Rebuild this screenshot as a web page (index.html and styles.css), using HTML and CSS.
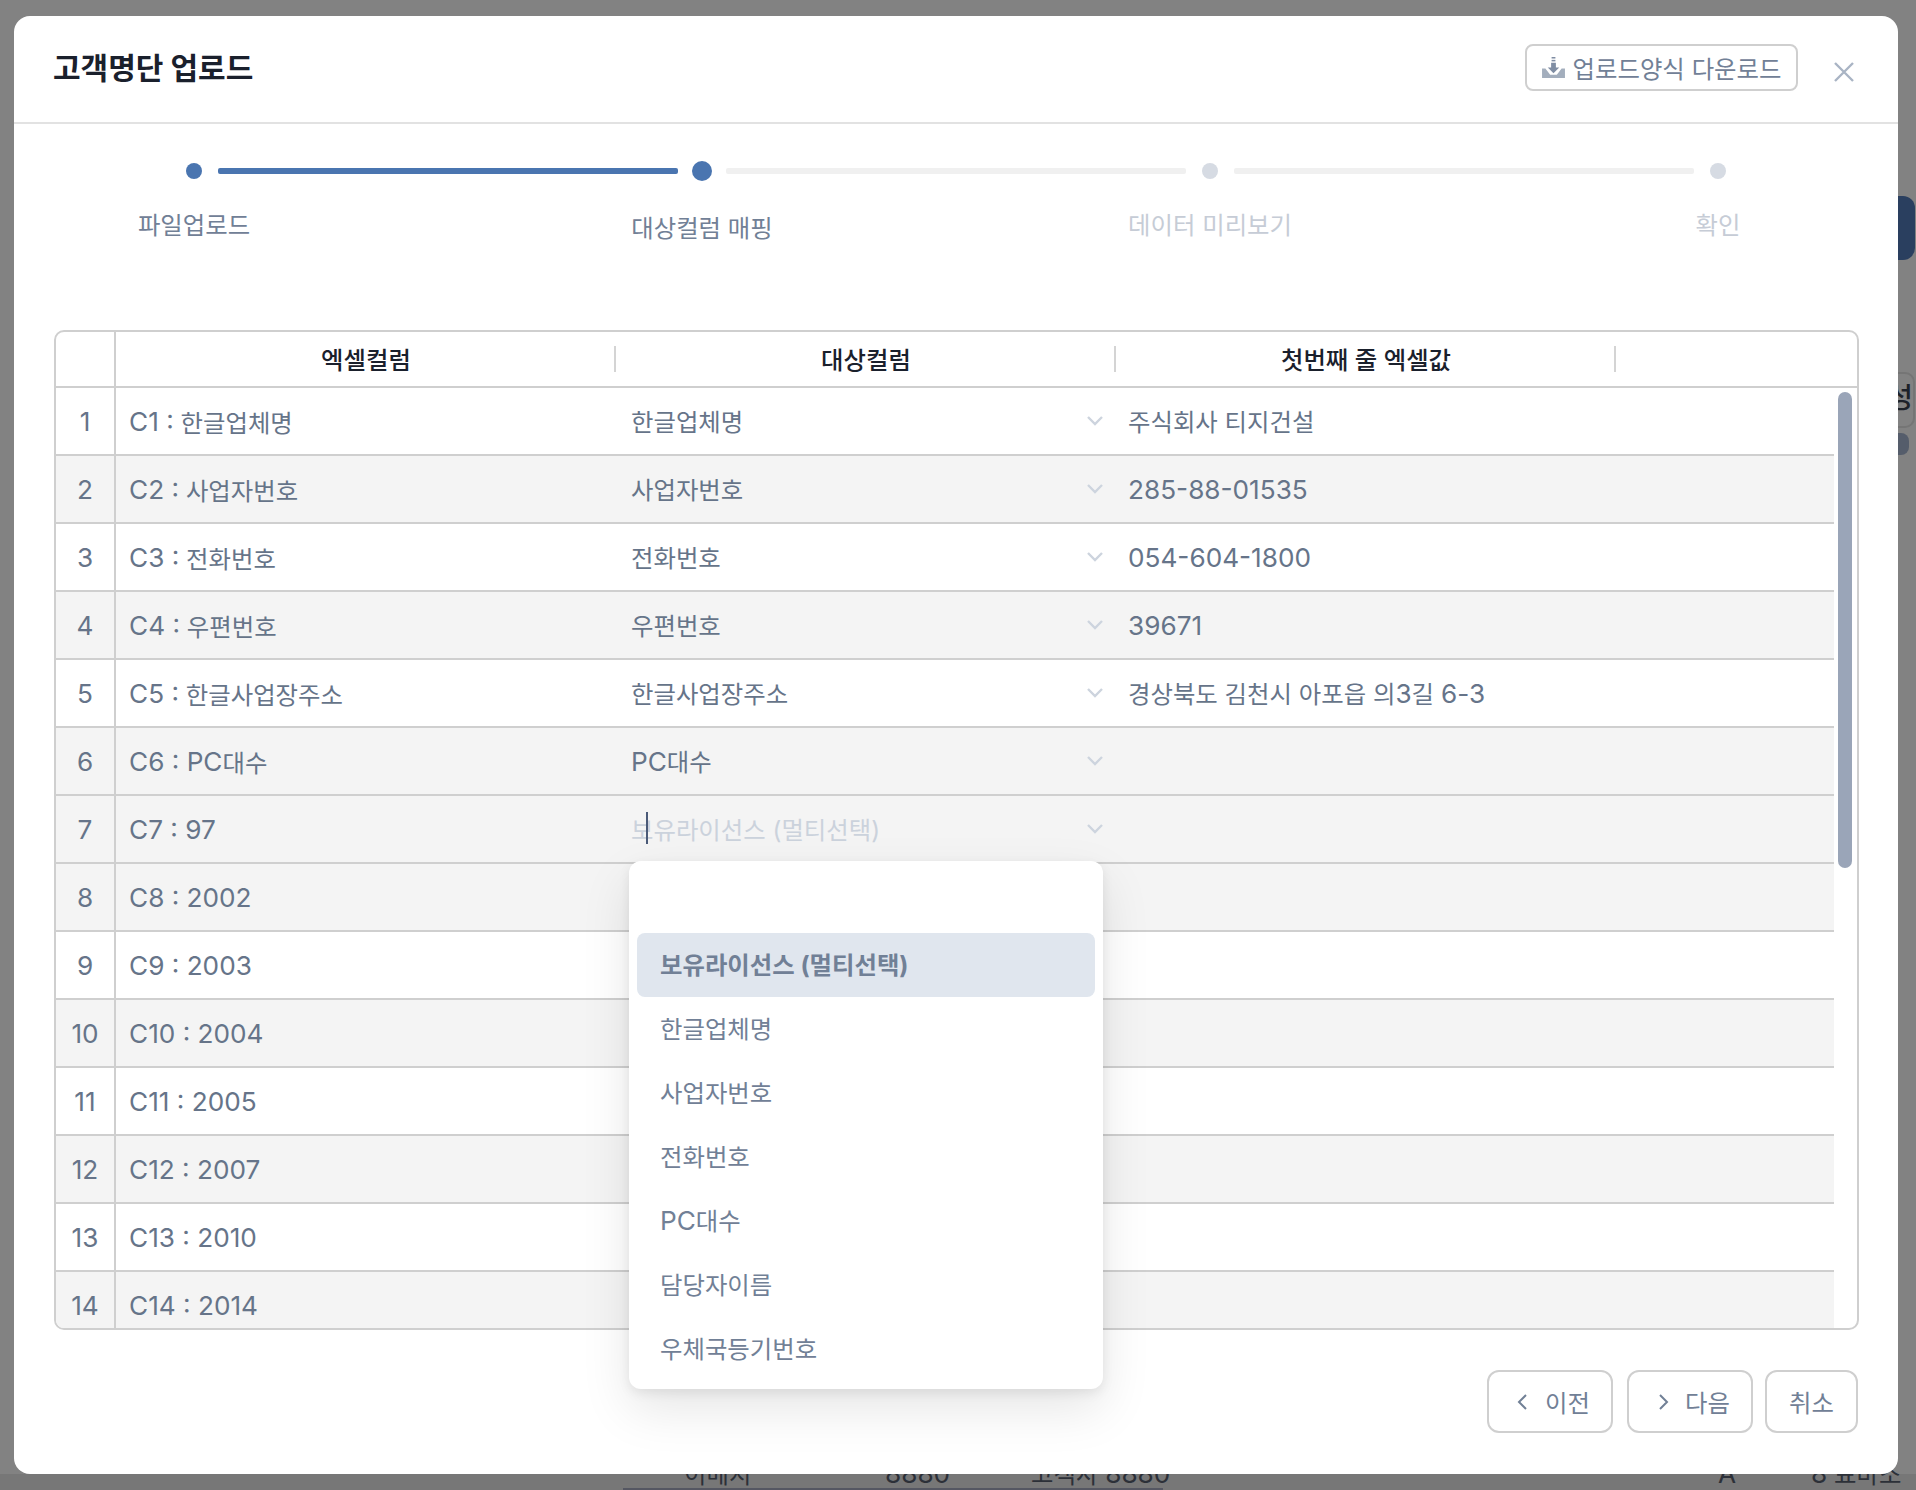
FILE: index.html
```html
<!DOCTYPE html>
<html lang="ko">
<head>
    <meta charset="UTF-8">
    <meta name="viewport" content="width=device-width, initial-scale=1.0">
    <title>고객명단 업로드</title>
    <link rel="stylesheet" href="styles.css">
</head>
<body>

<!-- Page behind the modal -->
<div class="behind">
  <div class="behind-navy"></div>
  <div class="behind-tag">성</div>
  <div class="behind-thumb"></div>
  <div class="behind-strip">
    <span class="behind-text bt-1">이메지</span>
    <span class="behind-text bt-2 num">8880</span>
    <span class="behind-text bt-3">고객사 <span class="num">8880</span></span>
    <span class="behind-text bt-4 num">A</span>
    <span class="behind-text bt-5"><span class="num">8</span> 표바소</span>
    <div class="behind-bar"></div>
  </div>
</div>

<!-- The Modal -->
<div class="modal">

  <div class="modal-header">
    <h1 class="modal-title">고객명단 업로드</h1>
    <button type="button" class="btn btn-download">
      <svg class="icon-download" viewBox="0 0 24 22" width="23" height="21">
        <rect x="10" y="0" width="4" height="1.6" fill="#7f8da3"/>
        <rect x="10" y="3" width="4" height="1.6" fill="#7f8da3"/>
        <path d="M9.5 6h5v5h3.500l-6 6-6-6h3.500z" fill="#7f8da3"/>
        <path d="M0 12h3.500l5 6.500h7l5-6.500H24v10H0z" fill="#a3aebd"/>
      </svg>
      업로드양식 다운로드
    </button>
    <svg class="icon-close" viewBox="0 0 22 22" width="22" height="22">
      <path d="M2 2l18 18M20 2L2 20" stroke="#a9b4c4" stroke-width="2.400" fill="none"/>
    </svg>
  </div>

  <!-- Steps -->
  <div class="steps-track">
    <span class="dot dot-done"></span>
    <span class="line line-done"></span>
    <span class="dot dot-active"></span>
    <span class="line"></span>
    <span class="dot"></span>
    <span class="line"></span>
    <span class="dot"></span>
  </div>
  <div class="steps-labels">
    <span class="step-label step-done">파일업로드</span>
    <span class="step-label step-done step-current">대상컬럼 매핑</span>
    <span class="step-label">데이터 미리보기</span>
    <span class="step-label">확인</span>
  </div>

  <!-- Mapping table -->
  <div class="table-wrap">
    <div class="table-head">
      <div class="th th-index"></div>
      <div class="th">엑셀컬럼</div>
      <div class="th">대상컬럼</div>
      <div class="th">첫번째 줄 엑셀값</div>
    </div>

    <div class="table-body">
      <div class="row">
        <div class="cell cell-index">1</div>
        <div class="cell cell-name"><span class="num">C1 :</span>&nbsp;한글업체명</div>
        <div class="cell cell-select"><span>한글업체명</span><svg class="chev" viewBox="0 0 16 10" width="16" height="10"><path d="M1 1l7 7 7-7"/></svg></div>
        <div class="cell cell-value"><span>주식회사 티지건설</span></div>
      </div>
      <div class="row">
        <div class="cell cell-index">2</div>
        <div class="cell cell-name"><span class="num">C2 :</span>&nbsp;사업자번호</div>
        <div class="cell cell-select"><span>사업자번호</span><svg class="chev" viewBox="0 0 16 10" width="16" height="10"><path d="M1 1l7 7 7-7"/></svg></div>
        <div class="cell cell-value num">285-88-01535</div>
      </div>
      <div class="row">
        <div class="cell cell-index">3</div>
        <div class="cell cell-name"><span class="num">C3 :</span>&nbsp;전화번호</div>
        <div class="cell cell-select"><span>전화번호</span><svg class="chev" viewBox="0 0 16 10" width="16" height="10"><path d="M1 1l7 7 7-7"/></svg></div>
        <div class="cell cell-value num">054-604-1800</div>
      </div>
      <div class="row">
        <div class="cell cell-index">4</div>
        <div class="cell cell-name"><span class="num">C4 :</span>&nbsp;우편번호</div>
        <div class="cell cell-select"><span>우편번호</span><svg class="chev" viewBox="0 0 16 10" width="16" height="10"><path d="M1 1l7 7 7-7"/></svg></div>
        <div class="cell cell-value num">39671</div>
      </div>
      <div class="row">
        <div class="cell cell-index">5</div>
        <div class="cell cell-name"><span class="num">C5 :</span>&nbsp;한글사업장주소</div>
        <div class="cell cell-select"><span>한글사업장주소</span><svg class="chev" viewBox="0 0 16 10" width="16" height="10"><path d="M1 1l7 7 7-7"/></svg></div>
        <div class="cell cell-value"><span>경상북도 김천시 아포읍 의<span class="num">3</span>길 <span class="num">6-3</span></span></div>
      </div>
      <div class="row">
        <div class="cell cell-index">6</div>
        <div class="cell cell-name"><span class="num">C6 : PC</span>대수</div>
        <div class="cell cell-select"><span><span class="num">PC</span>대수</span><svg class="chev" viewBox="0 0 16 10" width="16" height="10"><path d="M1 1l7 7 7-7"/></svg></div>
        <div class="cell cell-value"></div>
      </div>
      <div class="row row-hover">
        <div class="cell cell-index">7</div>
        <div class="cell cell-name num">C7 : 97</div>
        <div class="cell cell-select"><span class="placeholder">보유라이선스 (멀티선택)<i class="caret"></i></span><svg class="chev" viewBox="0 0 16 10" width="16" height="10"><path d="M1 1l7 7 7-7"/></svg></div>
        <div class="cell cell-value"></div>
      </div>
      <div class="row">
        <div class="cell cell-index">8</div>
        <div class="cell cell-name num">C8 : 2002</div>
        <div class="cell cell-select"></div>
        <div class="cell cell-value"></div>
      </div>
      <div class="row">
        <div class="cell cell-index">9</div>
        <div class="cell cell-name num">C9 : 2003</div>
        <div class="cell cell-select"></div>
        <div class="cell cell-value"></div>
      </div>
      <div class="row">
        <div class="cell cell-index">10</div>
        <div class="cell cell-name num">C10 : 2004</div>
        <div class="cell cell-select"></div>
        <div class="cell cell-value"></div>
      </div>
      <div class="row">
        <div class="cell cell-index">11</div>
        <div class="cell cell-name num">C11 : 2005</div>
        <div class="cell cell-select"></div>
        <div class="cell cell-value"></div>
      </div>
      <div class="row">
        <div class="cell cell-index">12</div>
        <div class="cell cell-name num">C12 : 2007</div>
        <div class="cell cell-select"></div>
        <div class="cell cell-value"></div>
      </div>
      <div class="row">
        <div class="cell cell-index">13</div>
        <div class="cell cell-name num">C13 : 2010</div>
        <div class="cell cell-select"></div>
        <div class="cell cell-value"></div>
      </div>
      <div class="row">
        <div class="cell cell-index">14</div>
        <div class="cell cell-name num">C14 : 2014</div>
        <div class="cell cell-select"></div>
        <div class="cell cell-value"></div>
      </div>
    </div>

    <div class="scroll-thumb"></div>
  </div>

  <!-- Footer buttons -->
  <div class="modal-footer">
    <button type="button" class="btn btn-step btn-prev">
      <svg viewBox="0 0 10 16" width="10" height="16"><path d="M9 1L2 8l7 7"/></svg>이전
    </button>
    <button type="button" class="btn btn-step btn-next">
      <svg viewBox="0 0 10 16" width="10" height="16"><path d="M1 1l7 7-7 7"/></svg>다음
    </button>
    <button type="button" class="btn btn-cancel">취소</button>
  </div>

  <!-- Open select menu -->
  <div class="menu">
    <div class="menu-item menu-item-selected">보유라이선스 (멀티선택)</div>
    <div class="menu-item">한글업체명</div>
    <div class="menu-item">사업자번호</div>
    <div class="menu-item">전화번호</div>
    <div class="menu-item"><span><span class="num">PC</span>대수</span></div>
    <div class="menu-item">담당자이름</div>
    <div class="menu-item">우체국등기번호</div>
  </div>
</div>

</body>
</html>
```

FILE: styles.css
```css
* {
    box-sizing: border-box;
}

body {
    margin: 0;
    height: 1490px;
    overflow: hidden;
    padding: 16px 18px 16px 14px;
    background-color: #828282;
    font-family: Inter, "Noto Sans CJK KR", sans-serif;
    font-size: 24.4px;
    color: #667489;
}

/* Latin and digits run larger than the hangul in this UI */
.num {
    font-size: 26.2px;
}

/* Page behind the modal */
.behind-navy {
    position: absolute;
    left: 1880px;
    top: 196px;
    width: 35px;
    height: 64px;
    background-color: #2a3f5f;
    border-radius: 12px;
}

.behind-tag {
    position: absolute;
    left: 1860px;
    top: 372px;
    width: 55px;
    height: 56px;
    border: 2px solid #757575;
    border-radius: 10px;
    color: #1d2129;
    font-size: 28px;
    font-weight: 500;
    text-align: right;
    line-height: 48px;
}

.behind-thumb {
    position: absolute;
    left: 1890px;
    top: 433px;
    width: 19px;
    height: 22px;
    background-color: #555d6b;
    border-radius: 8px;
}

.behind-strip {
    position: absolute;
    left: 0;
    top: 1474px;
    width: 100%;
    height: 16px;
    background-color: #777777;
}

.behind-text {
    position: absolute;
    top: -15px;
    color: #2c3038;
    line-height: 30px;
}

.bt-1 { left: 684px; }
.bt-2 { left: 885px; }
.bt-3 { left: 1031px; }
.bt-4 { left: 1718px; }
.bt-5 { left: 1811px; }

.behind-bar {
    position: absolute;
    left: 623px;
    top: 14px;
    width: 540px;
    height: 2px;
    background-color: #555762;
}

/* The Modal */
.modal {
    position: relative;
    width: 1884px;
    height: 1458px;
    background-color: #fff;
    border-radius: 16px;
}

.modal-header {
    display: flex;
    align-items: center;
    height: 108px;
    padding: 0 43px 0 39px;
    border-bottom: 2px solid #e2e2e2;
}

.modal-title {
    margin: 0 auto 6px 0;
    font-size: 30px;
    font-weight: 700;
    color: #1a202c;
}

/* Buttons */
.btn {
    display: flex;
    align-items: center;
    justify-content: center;
    font-family: inherit;
    font-size: 24.4px;
    color: #718096;
    background-color: #fff;
    border: 2px solid #cfcfcf;
    border-radius: 12px;
    padding: 0;
}

.btn-download {
    width: 273px;
    height: 47px;
    margin-bottom: 3px;
    border-radius: 8px;
}

.icon-download {
    margin-right: 8px;
}

.icon-close {
    margin: 6px 0 0 35px;
}

/* Steps */
.steps-track {
    display: flex;
    align-items: center;
    height: 20px;
    margin: 37px 0 0 172px;
}

.dot {
    width: 16px;
    height: 16px;
    border-radius: 50%;
    background-color: #d6dbe3;
}

.dot-done {
    background-color: #4a75b0;
}

.dot-active {
    width: 20px;
    height: 20px;
    margin: 0 -2px;
    background-color: #4a75b0;
}

.line {
    width: 460px;
    height: 6px;
    margin: 0 16px;
    border-radius: 2px;
    background-color: #f0f0f0;
}

.line-done {
    background-color: #4a75b0;
}

.steps-labels {
    display: flex;
    gap: 308px;
    height: 39px;
    margin: 26px 0 84px 80px;
    line-height: 36px;
}

.step-label {
    width: 200px;
    text-align: center;
    color: #c6ccd6;
}

.step-done {
    color: #718096;
}

.step-current {
    margin-top: 3px;
}

/* Mapping table */
.table-wrap {
    position: relative;
    width: 1805px;
    height: 1000px;
    margin-left: 40px;
    border: 2px solid #cfcfcf;
    border-radius: 10px;
    overflow: hidden;
}

.table-head {
    display: grid;
    grid-template-columns: 60px 500px 500px 500px;
    height: 56px;
    border-bottom: 2px solid #cfcfcf;
}

.th {
    position: relative;
    display: flex;
    align-items: center;
    justify-content: center;
    padding-bottom: 2px;
    font-weight: 500;
    color: #1a202c;
}

.th::after {
    content: "";
    position: absolute;
    right: 0;
    top: 14px;
    height: 26px;
    border-right: 2px solid #d4d4d4;
}

.th-index {
    border-right: 2px solid #cfcfcf;
}

.th-index::after {
    display: none;
}

.table-body {
    width: 1778px;
}

.row {
    display: grid;
    grid-template-columns: 60px 500px 500px 1fr;
    height: 68px;
    border-bottom: 2px solid #cfcfcf;
}

.row:nth-child(even), .row-hover {
    background-color: #f4f4f4;
}

.cell {
    display: flex;
    align-items: center;
    min-width: 0;
    white-space: pre;
}

.cell-index {
    justify-content: center;
    font-size: 26.2px;
    border-right: 2px solid #cfcfcf;
}

.cell-name {
    padding-left: 13px;
}

.cell-select {
    justify-content: space-between;
    padding-left: 15px;
    padding-right: 13px;
}

.cell-select > span, .cell-value > span {
    margin-bottom: 2px;
}

.cell-value {
    padding-left: 12px;
}

.chev {
    flex: none;
}

.chev path {
    fill: none;
    stroke: #cdd4de;
    stroke-width: 2.400;
}

.placeholder {
    position: relative;
    color: #cbd2dc;
}

.caret {
    position: absolute;
    left: 15px;
    top: 1px;
    width: 2px;
    height: 32px;
    background-color: #4a5a78;
}

.scroll-thumb {
    position: absolute;
    left: 1782px;
    top: 60px;
    width: 14px;
    height: 476px;
    border-radius: 7px;
    background-color: #9aa5b8;
}

/* Footer */
.modal-footer {
    display: flex;
    justify-content: flex-end;
    gap: 12px;
    margin-top: 40px;
    padding-right: 40px;
}

.btn-step, .btn-cancel {
    height: 63px;
}

.btn-step {
    width: 126px;
    justify-content: flex-end;
    padding-right: 21px;
}

.btn-step svg {
    fill: none;
    stroke: #718096;
    stroke-width: 2;
}

.btn-prev {
    margin-right: 2px;
}

.btn-prev svg {
    margin-right: 18px;
}

.btn-next svg {
    margin-right: 16px;
}

.btn-cancel {
    width: 93px;
}

/* Open select menu */
.menu {
    position: absolute;
    left: 615px;
    top: 845px;
    width: 474px;
    height: 528px;
    padding: 72px 8px 8px;
    background-color: #fff;
    border-radius: 12px;
    box-shadow: 0 20px 50px rgba(0,0,0,0.1), 0 4px 12px rgba(0,0,0,0.08);
}

.menu-item {
    display: flex;
    align-items: center;
    height: 64px;
    padding: 0 0 3px 23px;
    color: #718096;
    border-radius: 8px;
}

.menu-item-selected {
    background-color: #e0e6ee;
    font-weight: 700;
}
```
